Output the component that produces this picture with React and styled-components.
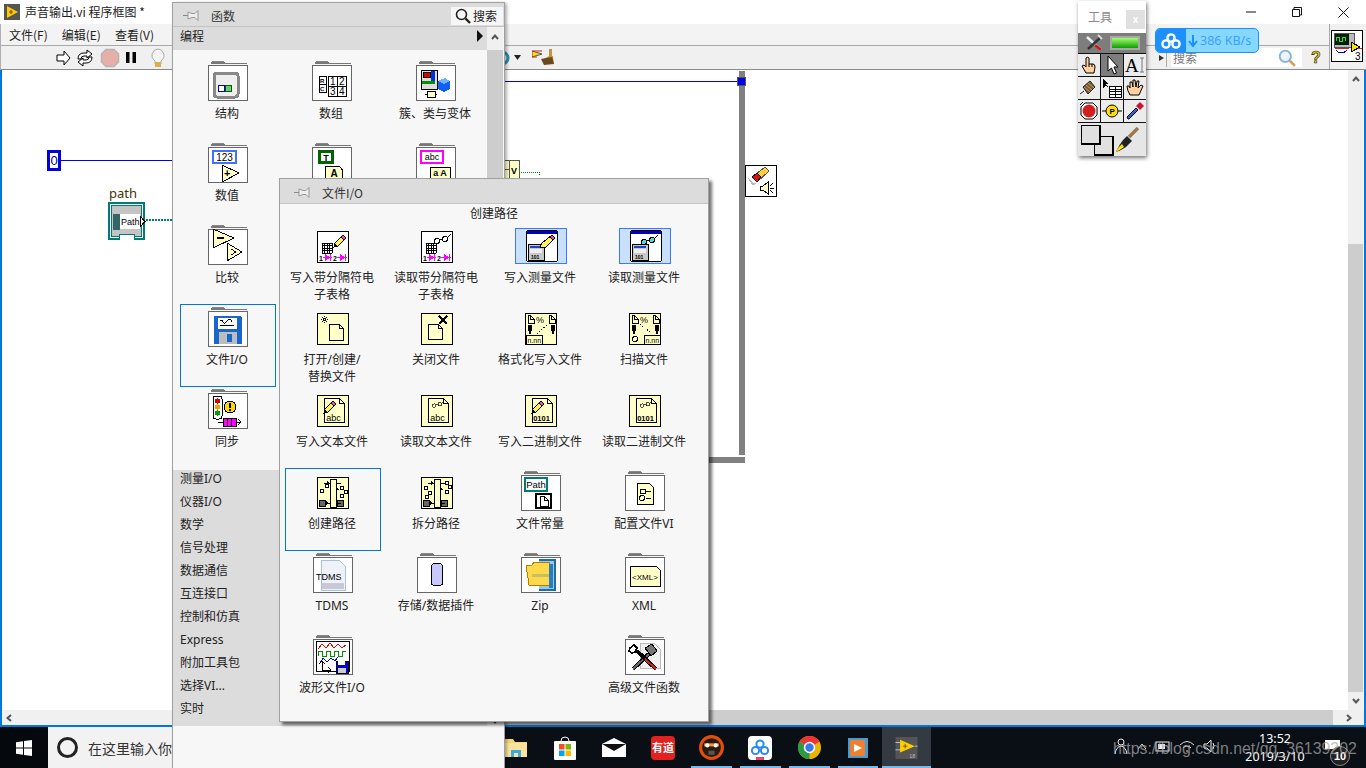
import React from "react";
import styled, { createGlobalStyle } from "styled-components";

const FONT = `"Noto Sans", "Noto Sans CJK SC", sans-serif`;
const CJK = `"Noto Sans CJK SC", "Noto Sans", sans-serif`;
const Y = "#ffffc8";

const Global = createGlobalStyle`
  html, body { margin: 0; padding: 0; width: 1366px; height: 768px; overflow: hidden; background: #fff; }
  body { font-family: ${FONT}; font-size: 12px; color: #222; }
  * { box-sizing: border-box; }
`;

const Desktop = styled.div`
  position: relative; width: 1366px; height: 768px; overflow: hidden;
  display: flex; flex-direction: column;
`;
const Window = styled.div`display: flex; flex-direction: column; height: 727px;`;
const TitleBar = styled.div`
  height: 24px; background: #fff; display: flex; align-items: center; padding-left: 4px; gap: 5px; flex: none;
`;
const TitleText = styled.span`font: 12px ${CJK}; color: #222; line-height: 16px;`;
const WinButtons = styled.div`margin-left: auto; display: flex;`;
const WinButton = styled.div`width: 46px; height: 24px; display: flex; align-items: center; justify-content: center;`;
const HeaderRow = styled.div`display: flex; height: 46px; flex: none; border-bottom: 1px solid #8a8a8a; background: #f0f0f0; border-left: 1px solid #b0b0b0;`;
const HeaderMain = styled.div`flex: 1; display: flex; flex-direction: column; min-width: 0;`;
const MenuBar = styled.div`
  height: 22px; background: #f3f3f3; border-bottom: 1px solid #a8a8a8; display: flex; align-items: center;
  padding-left: 8px; gap: 14px; flex: none;
`;
const MenuItem = styled.span`font: 12px ${CJK}; color: #222;`;
const Toolbar = styled.div`flex: 1; display: flex; align-items: center; padding-left: 52px; padding-right: 6px;`;
const ToolIcon = styled.div`margin-left: ${(p) => p.$gap || 0}px; display: flex; align-items: center; justify-content: center; height: 20px;`;
const SearchMark = styled.div`
  margin-left: auto; width: 0; height: 0; border-left: 5px solid #333; border-top: 3px solid transparent; border-bottom: 3px solid transparent;
`;
const SearchSep = styled.div`width: 1px; height: 18px; background: #aaa; margin: 0 4px 0 2px;`;
const SearchField = styled.div`
  width: 131px; height: 19px; background: #fff; display: flex; align-items: center; justify-content: space-between;
  padding: 0 6px 0 2px; font: 12px ${CJK}; color: #777;
`;
const HelpMark = styled.div`margin-left: 9px; width: 12px; font: 700 16px "Liberation Sans", sans-serif; color: #e8d000; -webkit-text-stroke: .6px #222; line-height: 20px;`;
const ViPane = styled.div`width: 36px; flex: none; border-left: 1px solid #a8a8a8; padding: 6px 0 0 1px; margin-right: 1px;`;

const Canvas = styled.div`
  flex: 1; display: flex; flex-direction: column; min-height: 0;
  border: 2px solid #0078d7; border-top: 0; background: #fff;
`;
const CanvasRow = styled.div`flex: 1; display: flex; min-height: 0;`;
const CanvasArea = styled.div`flex: 1;`;
const VScroll = styled.div`width: 15px; flex: none; background: #f0f0f0; display: flex; flex-direction: column; align-items: stretch; margin-right: 1px;`;
const ScrollBtn = styled.div`height: ${(p) => p.$h || 18}px; display: flex; align-items: center; justify-content: center; flex: none;`;
const VSpace = styled.div`height: ${(p) => p.$h}px; flex: none;`;
const Thumb = styled.div`background: #cdcdcd; flex: 1;`;
const HScroll = styled.div`height: 15px; flex: none; background: #f0f0f0; display: flex; align-items: stretch;`;
const HSpace = styled.div`width: 300px; flex: none; padding-left: 2px; display: flex; align-items: center;`;
const HEnd = styled.div`width: 31px; flex: none; display: flex; align-items: center; justify-content: center;`;

const Taskbar = styled.div`flex: 1; background: #0a0f16; display: flex; align-items: stretch; position: relative;`;
const StartBtn = styled.div`width: 48px; flex: none; background: #05080d; display: flex; align-items: center; justify-content: center;`;
const TaskSearch = styled.div`
  width: 444px; flex: none; background: #f2f2f2; display: flex; align-items: center; padding-left: 9px; gap: 10px;
  font: 14px ${CJK}; color: #333;
`;
const Ring = styled.div`width: 21px; height: 21px; border-radius: 50%; border: 3px solid #222;`;
const TaskItem = styled.div`
  width: 48.8px; flex: none; display: flex; align-items: center; justify-content: center; position: relative;
  background: ${(p) => (p.$active ? "#333a42" : "transparent")};
  &::after {
    content: ""; position: absolute; bottom: 0; height: 2px; background: #76b9ed;
    left: ${(p) => (p.$active ? 0 : 4)}px; right: ${(p) => (p.$active ? 0 : 4)}px;
    display: ${(p) => (p.$open ? "block" : "none")};
  }
`;
const Clock = styled.div`
  position: absolute; left: 1240px; top: 0; width: 70px; height: 41px; color: #fff; text-align: center;
  font: 12.5px/18px ${FONT}; padding-top: 3px;
`;
const Tray = styled.div`position: absolute; left: 1113px; top: 10px; display: flex; gap: 8px; color: #ddd; align-items: center;`;
const NotifyBox = styled.div`
  position: absolute; left: 1325px; top: 13px; width: 15px; height: 11px; background: #fff;
  border-bottom: 2px solid #222;
`;
const NotifyBadge = styled.div`
  position: absolute; left: 1330px; top: 19px; width: 20px; height: 20px; border-radius: 50%; background: #222; border: 1px solid #888;
  color: #fff; font: 700 11px/18px "Liberation Sans", sans-serif; text-align: center;
`;
const Watermark = styled.div`
  position: absolute; left: 1113px; top: 739px; font: 15.9px/20px "Liberation Sans", sans-serif; color: rgba(170,170,170,.72); white-space: nowrap;
`;

const Palette = styled.div`
  position: absolute; left: 172px; top: 2px; width: 333px; bottom: 0; background: #f7f7f7;
  border: 1px solid #a0a0a0; border-bottom: 0; display: flex; flex-direction: column;
  box-shadow: 2px 1px 3px rgba(0,0,0,.3);
`;
const PalTitle = styled.div`
  height: 24px; flex: none; background: #dcdcdc; border-bottom: 1px solid #c4c4c4; display: flex; align-items: center; padding: 2px 0 0 10px; gap: 11px;
  font: 12px ${CJK}; color: #333;
`;
const PalSearch = styled.div`
  margin-left: auto; margin-right: 1px; width: 52px; height: 18px; background: #f6f6f6; display: flex; align-items: center; gap: 2px; padding-left: 4px; color: #222;
`;
const PalBody = styled.div`flex: 1; display: flex; min-height: 0;`;
const PalMain = styled.div`width: 314px; flex: none; display: flex; flex-direction: column;`;
const PalNav = styled.div`
  height: 23px; flex: none; background: #dcdcdc; display: flex; align-items: flex-start; justify-content: space-between;
  padding: 1px 4px 0 7px; font: 12px/16px ${CJK};
`;
const NavArrow = styled.div`margin-top: 2px; width: 0; height: 0; border-left: 6px solid #111; border-top: 6px solid transparent; border-bottom: 6px solid transparent;`;
const PalGrid = styled.div`
  display: grid; grid-template-columns: repeat(3, 96px); column-gap: 8px; grid-auto-rows: 82px;
  padding: 8px 0 2px 7px; flex: none;
`;
const Cell = styled.div`
  display: flex; flex-direction: column; align-items: center; height: 82px;
  ${(p) => p.$selected && "box-shadow: inset 0 0 0 1px #0078d7; height: 83px;"}
`;
const Slot = styled.div`height: 47px; flex: none; padding-top: ${(p) => p.$top}px; display: flex; flex-direction: column; align-items: center;`;
const Label = styled.div`
  width: 92px; padding-right: 2px; text-align: center; font: 12px/17px ${FONT}; color: #222; white-space: pre-line;
`;
const Categories = styled.div`background: #dcdcdc; padding-bottom: 3px; flex: none;`;
const Category = styled.div`height: 23px; padding-left: 7px; font: 12px/18px ${FONT}; color: #222;`;
const PalScroll = styled.div`width: 16px; flex: none; display: flex; flex-direction: column;`;
const ScrollUp = styled.div`height: 23px; flex: none; background: #f0f0f0; display: flex; align-items: flex-start; padding-top: 5px; justify-content: center;`;
const ScrollThumb = styled.div`height: 668px; flex: none; background: #cdcdcd;`;
const ScrollDown = styled.div`height: 8px; flex: none; background: #f0f0f0; display: flex; align-items: center; justify-content: center;`;

const SubPalette = styled.div`
  position: absolute; left: 279px; top: 178px; width: 430px; height: 544px; background: #f7f7f7;
  border: 1px solid #a0a0a0; box-shadow: 3px 3px 3px rgba(0,0,0,.55); display: flex; flex-direction: column;
`;
const SubTitle = styled(PalTitle)`height: 25px; padding-left: 14px;`;
const SubCaption = styled.div`height: 18px; flex: none; text-align: center; font: 12px/17px ${CJK}; color: #222;`;
const SubGrid = styled.div`
  display: grid; grid-template-columns: repeat(4, 96px); column-gap: 8px; grid-auto-rows: 82px; padding-left: 5px;
`;

const Tools = styled.div`
  position: absolute; left: 1078px; top: 1px; width: 68px; height: 155px; background: #e6e6e6; display: flex; flex-direction: column;
  box-shadow: 1px 2px 4px rgba(0,0,0,.55);
`;
const ToolsTitle = styled.div`
  height: 32px; flex: none; background: #fff; display: flex; align-items: center; padding: 0 0 2px 10px; justify-content: space-between;
  font: 12px ${CJK}; color: #8a8a8a;
`;
const ToolsClose = styled.div`width: 19px; height: 19px; margin: 6px 1px 0 0; background: #e0e0e0; color: #fff; font: 700 10px/19px "Liberation Sans", sans-serif; text-align: center;`;
const ToolsStatus = styled.div`height: 21px; flex: none; background: #7d7d7d; display: flex; align-items: center; justify-content: space-between; padding: 0 6px 0 7px; border-bottom: 1px solid #111;`;
const Led = styled.div`width: 30px; height: 14px; border: 2px solid #a8a8a8; background: linear-gradient(180deg,#a4ff70,#0e9c05); `;
const ToolsGrid = styled.div`display: grid; grid-template-columns: repeat(3, 1fr); grid-auto-rows: 22px; gap: 1px; background: #111; padding-bottom: 1px; flex: none;`;
const ToolCell = styled.div`background: ${(p) => (p.$on ? "#7d7d7d" : "#ececec")}; display: flex; align-items: center; justify-content: center;`;
const ToolsBottom = styled.div`flex: 1; display: flex; align-items: center; padding-left: 2px;`;

const Node = styled.div`position: absolute; left: ${(p) => p.$x}px; top: ${(p) => p.$y}px; line-height: 0;`;
const HWire = styled.div`position: absolute; left: ${(p) => p.$x}px; top: ${(p) => p.$y}px; width: ${(p) => p.$w}px; height: 1px; background: #0000e0;`;
const FrameV = styled.div`position: absolute; left: 739px; top: 71px; width: 6px; height: 392px; background: #808080;`;
const FrameH = styled.div`position: absolute; left: 700px; top: 457px; width: 45px; height: 6px; background: #808080;`;
const FrameCorner = styled.div`position: absolute; left: 737px; top: 455px; width: 8px; height: 8px; border-top: 2px dashed #fff; pointer-events: none;`;
const BlueTunnel = styled.div`position: absolute; left: 737px; top: 77px; width: 9px; height: 9px; background: #0000f0; border: 1px solid #555;`;
const ConstBox = styled.div`
  position: absolute; left: 47px; top: 150px; width: 14px; height: 21px; border: 3px solid #0000e0; background: #fff;
  font: 13px/15px "Liberation Sans", sans-serif; color: #000090; text-align: center;
`;
const PathLabel = styled.div`position: absolute; left: 109px; top: 185px; font: 13px/16px ${FONT}; color: #443300;`;

const S = styled.svg`display: block; shape-rendering: crispEdges; flex: none;`;
const Sm = styled.svg`display: block; flex: none;`;
const T = ({ x, y, s = 7, w = 400, c = "#000", a = "start", children, f = "Liberation Sans" }) => (
  <text x={x} y={y} fontSize={s} fontWeight={w} fill={c} textAnchor={a} fontFamily={f}>{children}</text>
);

const FolderTab = () => (
  <S width="40" height="4" viewBox="0 0 40 4">
    <rect x="3" y="2" width="36" height="1" fill="#777" /><rect x="4" y="0" width="12" height="2" fill="#888" /><rect x="3" y="1" width="14" height="1" fill="#777" />
  </S>
);
const FolderBox = ({ children }) => (
  <>
    <FolderTab />
    <S width="40" height="36" viewBox="0 0 40 36"><rect x=".5" y=".5" width="39" height="35" fill="#fff" stroke="#666" />{children}</S>
  </>
);
const Box = ({ fill = "#fff", children }) => (
  <S width="32" height="32" viewBox="0 0 32 32"><rect x=".5" y=".5" width="31" height="31" fill={fill} stroke="#000" />{children}</S>
);
const Pencil = ({ x = 0, y = 0 }) => (
  <g transform={`translate(${x} ${y})`}>
    <path d="M0 12 L1 8 L9 0 L12 3 L4 11 Z" fill="#fff060" stroke="#000" />
    <path d="M9 0 L12 3 L10 5 L7 2 Z" fill="#ff40c0" stroke="#000" />
    <path d="M0 12 L1 9 L3 11 Z" fill="#000" />
  </g>
);
const Glasses = ({ x = 0, y = 0, c = "none", k = 1 }) => (
  <g transform={`translate(${x} ${y}) scale(${k})`} fill={c} stroke="#000">
    <circle cx="3" cy="8" r="2.5" /><circle cx="11" cy="6" r="2.5" /><path d="M5 7 L9 6 M13 5 L17 1" fill="none" />
  </g>
);
const SheetGrid = () => (
  <g stroke="#000" fill="#fff">
    {[0, 1, 2, 3, 4].map((i) => <path key={i} d={`M5 ${12 + i * 2.5} H15`} />)}
    {[0, 1, 2, 3, 4].map((i) => <path key={"v" + i} d={`M${5 + i * 2.5} 12 V22`} />)}
  </g>
);
const SheetFoot = () => (
  <g>
    <T x="2" y="30" s="7" w="700">1</T><rect x="6" y="26" width="9" height="1" fill="#f0f" /><path d="M8 23 L13 26.5 L8 30 Z" fill="#f0f" /><rect x="13" y="23" width="1" height="7" fill="#f0f" />
    <T x="16" y="30" s="7" w="700">2</T><rect x="20" y="26" width="10" height="1" fill="#f0f" /><path d="M23 23 L28 26.5 L23 30 Z" fill="#f0f" /><rect x="28" y="23" width="1" height="7" fill="#f0f" />
  </g>
);
const ExpressHl = styled.div`width: 52px; height: 36px; background: #c8e0fa; border: 1px solid #3b78ff; padding: 1px 0 0 10px; margin-top: -3px;`;
const ExpressIcon = ({ children }) => (
  <ExpressHl>
    <S width="32" height="32" viewBox="0 0 32 32">
      <rect x=".5" y=".5" width="31" height="31" rx="2" fill="#fff" stroke="#000" />
      <rect x="1" y="1" width="30" height="3" fill="#0000c0" />
      <rect x="2" y="14" width="16" height="16" fill="#c8c8c8" stroke="#000" />
      <rect x="4" y="16" width="12" height="2" fill="#2040d0" /><rect x="4" y="19" width="12" height="4" fill="#eee" />
      <T x="5" y="29" s="5" w="700">101</T>
      {children}
    </S>
  </ExpressHl>
);
const Doc = ({ x, y, w = 12, h = 15, f = "#fff" }) => (
  <path d={`M${x} ${y} H${x + w - 4} L${x + w} ${y + 4} V${y + h} H${x} Z M${x + w - 4} ${y} V${y + 4} H${x + w}`} fill={f} stroke="#000" />
);
const FormatBody = ({ flip }) => (
  <g>
    <Doc x={3} y={2} w={6} h={8} f={Y} /><Doc x={24} y={2} w={6} h={8} f={Y} />
    <T x="11" y="10" s="9">%</T>
    <rect x="3" y="12" width="4" height="6" fill="#000" /><rect x="4" y="18" width="2" height="3" fill="#000" />
    <rect x="26" y="12" width="4" height="6" fill="#000" /><rect x="27" y="18" width="2" height="3" fill="#000" />
    <path d={flip ? "M11 11 L21 19" : "M12 21 L22 12"} stroke="#000" strokeDasharray="1 2" fill="none" />
  </g>
);
const TextDoc = ({ tool, label }) => (
  <Box fill={Y}>
    <path d="M7 3 H22 L27 8 V27 H7 Z M22 3 V8 H27" fill={Y} stroke="#000" />
    {tool}
    <T x="16.5" y="26" s={label === "abc" ? 9 : 7.5} a="middle" w={label === "abc" ? 400 : 700}>{label}</T>
  </Box>
);
const PathSplit = ({ build }) => (
  <Box fill={Y}>
    <rect x="13" y="2" width="6" height="28" fill={Y} stroke="#000" />
    <rect x="2" y="23" width="6" height="6" fill="#666" stroke="#000" />
    <rect x="20" y="23" width="6" height="6" fill="#666" stroke="#000" />
    <g fill="#fff" stroke="#000">
      {(build
        ? [[3, 12], [8, 7], [23, 9], [27, 13], [23, 17]]
        : [[3, 9], [7, 14], [4, 18], [24, 4], [27, 8], [24, 13]]
      ).map(([x, y], i) => <rect key={i} x={x} y={y} width="3" height="3" />)}
    </g>
    <path d="M9 26 H13 M19 26 H24 M7 6 H13 M19 6 H24 M19 12 H22" stroke="#000" />
    <path d="M10 4 L13 6 L10 8 Z M19 10 L22 12 L19 14 Z M9 24 L12 26 L9 28 Z" fill="#000" />
  </Box>
);

const Icons = {
  structure: <FolderBox><rect x="6" y="8" width="24" height="24" rx="3" fill="#eee" stroke="#888" strokeWidth="3" /><rect x="10" y="20" width="6" height="6" fill="#fff" stroke="#0000c0" /><rect x="17" y="20" width="6" height="6" fill="#70c870" stroke="#006000" /></FolderBox>,
  array: <FolderBox>
    <g fill="#fff" stroke="#000">
      <rect x="7" y="11" width="7" height="8" /><rect x="7" y="19" width="7" height="8" />
      <rect x="16" y="11" width="18" height="10" /><path d="M25 11 V21" /><rect x="16" y="21" width="18" height="10" /><path d="M25 21 V31" />
    </g>
    <T x="8" y="17.5" s="6" w="700">R</T><T x="8" y="25.5" s="6" w="700">C</T><T x="18" y="20" s="10">1</T><T x="27" y="20" s="10">2</T><T x="18" y="30" s="10">3</T><T x="27" y="30" s="10">4</T>
  </FolderBox>,
  cluster: <FolderBox>
    <rect x="5" y="5" width="16" height="19" fill="#ddd" stroke="#000" /><rect x="7" y="7" width="7" height="5" fill="#e00000" stroke="#000" /><rect x="15" y="6" width="4" height="10" fill="#0030e0" /><rect x="6" y="16" width="13" height="3" fill="#009000" />
    <path d="M22 16 L29 13 L34 16 V24 L28 27 L22 24 Z" fill="#1060f0" /><path d="M22 16 L28 19 L34 16 L29 13 Z" fill="#70b0ff" />
    <rect x="11" y="26" width="8" height="6" fill={Y} stroke="#000" /><path d="M9 29 H11 M19 29 H21" stroke="#000" />
  </FolderBox>,
  numeric: <FolderBox>
    <rect x="5" y="4" width="23" height="12" fill="#fff" stroke="#4070ff" strokeWidth="2" /><T x="16.5" y="13.5" s="10" a="middle">123</T>
    <path d="M14 18 V35 L31 26 Z" fill={Y} stroke="#000" /><T x="16" y="30" s="11" w="700">+</T>
  </FolderBox>,
  boolean: <FolderBox><rect x="6" y="3" width="16" height="14" fill="#006400" /><rect x="9" y="6" width="10" height="8" fill="#fff" /><T x="14" y="13.5" s="9" a="middle" w="700">T</T><path d="M13 19 H24 Q31 19 31 27 Q31 35 24 35 H13 Z" fill={Y} stroke="#000" /><T x="22" y="30" s="10" a="middle" w="700">A</T></FolderBox>,
  string: <FolderBox><rect x="5" y="4" width="22" height="12" fill="#fff" stroke="#f0f" strokeWidth="2" /><T x="16" y="13" s="9" a="middle">abc</T><rect x="14" y="20" width="20" height="11" fill={Y} stroke="#000" /><T x="24" y="29" s="9" a="middle" w="700">a A</T></FolderBox>,
  compare: <FolderBox><path d="M5 0 V19 L26 9 Z" fill={Y} stroke="#000" /><rect x="9" y="8" width="7" height="2" fill="#000" /><path d="M19 14 V32 L34 23 Z" fill={Y} stroke="#000" /><path d="M23 20 L28 23 L23 26" stroke="#000" fill="none" /></FolderBox>,
  fileio: <FolderBox>
    <path d="M6 5 H32 L34 7 V33 H6 Z" fill="#1b66c9" /><rect x="10" y="7" width="19" height="11" fill="#fff" /><path d="M12 10 Q14 8 15 11 T19 10 T24 11 M12 14 H26" stroke="#000" fill="none" />
    <rect x="11" y="21" width="18" height="12" fill="#bdbdbd" /><rect x="19" y="23" width="5" height="8" fill="#1b66c9" />
  </FolderBox>,
  sync: <FolderBox>
    <rect x="5" y="3" width="9" height="23" rx="3" fill="#fff" stroke="#000" />
    <circle cx="9.5" cy="8" r="2.6" fill="#e00000" /><circle cx="9.5" cy="14" r="2.6" fill="#f0a000" /><circle cx="9.5" cy="20" r="2.6" fill="#00a000" />
    <circle cx="22" cy="14" r="6" fill="#ffd800" stroke="#000" /><rect x="21" y="10" width="2" height="5" fill="#000" /><rect x="21" y="16" width="2" height="2" fill="#000" />
    <path d="M10 29 H15 M28 29 H32 M30 26 L33 29 L30 32" stroke="#000" fill="none" /><rect x="15" y="25" width="13" height="8" fill="#f0f" stroke="#000" /><path d="M19 25 V33 M23 25 V33" stroke="#000" />
  </FolderBox>,
  writeSheet: <Box><SheetGrid /><Pencil x={17} y={4} /><SheetFoot /></Box>,
  readSheet: <Box><SheetGrid /><Glasses x={13} y={2} /><SheetFoot /></Box>,
  writeMeas: <ExpressIcon><path d="M14 17 L16 13 L26 5 L29 8 L19 18 Z" fill="#fff060" stroke="#000" /><path d="M26 5 L29 8 L27 10 L24 7 Z" fill="#ff40c0" stroke="#000" /></ExpressIcon>,
  readMeas: <ExpressIcon><Glasses x={11} y={4} c="#40e0e0" /></ExpressIcon>,
  open: <Box fill={Y}><Doc x={12} y={11} w={14} h={16} f={Y} /><path d="M5 4 L10 9 M10 4 L5 9 M7.5 3 V10 M4 6.5 H11" stroke="#000" strokeDasharray="1 1" /></Box>,
  close: <Box fill={Y}><Doc x={7} y={11} w={14} h={15} f={Y} /><path d="M18 3 L26 11 M26 3 L18 11" stroke="#000" strokeWidth="2" /></Box>,
  format: <Box fill={Y}><FormatBody /><rect x="1" y="22" width="16" height="9" fill={Y} stroke="#000" /><T x="2.5" y="29.5" s="7">n.nn</T></Box>,
  scan: <Box fill={Y}><FormatBody flip /><circle cx="6" cy="26" r="2.5" fill="none" stroke="#000" /><rect x="15" y="22" width="16" height="9" fill={Y} stroke="#000" /><T x="16.5" y="29.5" s="7">n.nn</T></Box>,
  writeText: <TextDoc label="abc" tool={<Pencil x={7} y={6} />} />,
  readText: <TextDoc label="abc" tool={<Glasses x={11} y={5} k={0.7} />} />,
  writeBin: <TextDoc label="0101" tool={<Pencil x={7} y={6} />} />,
  readBin: <TextDoc label="0101" tool={<Glasses x={11} y={5} k={0.7} />} />,
  build: <PathSplit build />,
  strip: <PathSplit />,
  pathConst: <FolderBox>
    <rect x="4" y="3" width="22" height="13" fill="#fff" stroke="#007b73" strokeWidth="2" /><T x="15" y="13" s="9.5" a="middle">Path</T>
    <rect x="15" y="19" width="15" height="14" fill="#fff" stroke="#000" strokeWidth="2" /><Doc x={19} y={21} w={8} h={10} />
  </FolderBox>,
  config: <FolderBox><path d="M12 8 H24 L28 12 V29 H12 Z" fill={Y} stroke="#000" /><rect x="15" y="14" width="5" height="4" fill="none" stroke="#000" /><circle cx="17" cy="23" r="2.5" fill="none" stroke="#000" /><path d="M21 16 H26 M21 23 H26" stroke="#000" /></FolderBox>,
  tdms: <FolderBox><path d="M8 3 H26 L32 9 V33 H8 Z" fill="#eef2fa" stroke="#a8c0d8" /><rect x="9" y="26" width="22" height="6" fill="#c8c8d8" /><T x="3" y="23" s="9" c="#000">TDMS</T></FolderBox>,
  storage: <FolderBox><ellipse cx="20" cy="9" rx="5.5" ry="2.5" fill="#c8c8ff" stroke="#000" /><path d="M14.5 9 V27 Q20 31 25.5 27 V9" fill="#c8c8ff" stroke="#000" /></FolderBox>,
  zip: <FolderBox>
    <path d="M18 3 H34 V33 H18" fill="#9cc8e8" stroke="#1a6fa8" strokeWidth="2" />
    <path d="M5 8 H11 L13 5 H28 V28 H8 Z" fill="#ffd84c" stroke="#b08000" /><rect x="11" y="17" width="18" height="3" fill="#c8c060" />
    <rect x="28" y="7" width="4" height="24" fill="#2a7cc0" />
  </FolderBox>,
  xml: <FolderBox><path d="M5 9 H31 L35 13 V29 H5 Z" fill={Y} stroke="#000" /><T x="20" y="23" s="8" a="middle">&lt;XML&gt;</T></FolderBox>,
  waveFile: <FolderBox>
    <rect x="3" y="2" width="33" height="30" fill="#fff" stroke="#000" />
    <path d="M5 10 L9 5 L13 9 L17 4 L21 9 L25 5 L29 9 L33 6" stroke="#e00000" fill="none" />
    <path d="M5 17 V12 H9 V17 H13 V12 H17 V17 H21 V12 H25 V17 H29 V12 H33" stroke="#009000" fill="none" />
    <path d="M7 24 L10 19 L14 23 L18 19 L22 22 L25 18" stroke="#0000e0" fill="none" />
    <path d="M9 31 V22 M6 25 L9 22 L12 25 M9 31 H18 M15 28 L18 31 L15 34" stroke="#000" fill="none" />
    <rect x="23" y="22" width="12" height="12" fill="#0000d0" stroke="#000" /><rect x="25" y="22" width="7" height="4" fill="#fff" /><rect x="25" y="29" width="8" height="5" fill="#ccc" />
  </FolderBox>,
  advanced: <FolderBox>
    <path d="M15 4 H29 L35 10 V29 H15 Z" fill="#f0f0f0" stroke="#bbb" />
    <path d="M8 30 L26 13" stroke="#000" strokeWidth="4" /><path d="M8 30 L26 13" stroke="#666" strokeWidth="2" />
    <path d="M20 9 L27 5 L32 12 L26 17 Z" fill="#777" stroke="#000" />
    <path d="M31 30 L12 12" stroke="#000" strokeWidth="4" /><path d="M31 30 L20 20" stroke="#d02020" strokeWidth="2" />
    <path d="M5 9 L9 6 L12 9 L10 13 L7 14 L4 12 Z" fill="#fff" stroke="#000" strokeWidth="1.6" />
  </FolderBox>,
};

const FOLDERS = ["structure","array","cluster","numeric","boolean","string","compare","fileio","sync","pathConst","config","tdms","storage","zip","xml","waveFile","advanced"];
const SlotFor = ({ name }) => <Slot $top={FOLDERS.includes(name) ? 3 : 9}>{Icons[name]}</Slot>;

const palItems = [
  ["structure", "结构"], ["array", "数组"], ["cluster", "簇、类与变体"],
  ["numeric", "数值"], ["boolean", ""], ["string", ""],
  ["compare", "比较"], null, null,
  ["fileio", "文件I/O", true], null, null,
  ["sync", "同步"], null, null,
];
const subItems = [
  ["writeSheet", "写入带分隔符电子表格"], ["readSheet", "读取带分隔符电子表格"], ["writeMeas", "写入测量文件"], ["readMeas", "读取测量文件"],
  ["open", "打开/创建/\n替换文件"], ["close", "关闭文件"], ["format", "格式化写入文件"], ["scan", "扫描文件"],
  ["writeText", "写入文本文件"], ["readText", "读取文本文件"], ["writeBin", "写入二进制文件"], ["readBin", "读取二进制文件"],
  ["build", "创建路径", true], ["strip", "拆分路径"], ["pathConst", "文件常量"], ["config", "配置文件VI"],
  ["tdms", "TDMS"], ["storage", "存储/数据插件"], ["zip", "Zip"], ["xml", "XML"],
  ["waveFile", "波形文件I/O"], null, null, ["advanced", "高级文件函数"],
];
const categories = ["测量I/O", "仪器I/O", "数学", "信号处理", "数据通信", "互连接口", "控制和仿真", "Express", "附加工具包", "选择VI...", "实时"];

const Items = ({ list }) => list.map((it, i) =>
  it ? (
    <Cell key={i} $selected={it[2]}>
      <SlotFor name={it[0]} />
      <Label>{it[1]}</Label>
    </Cell>
  ) : <div key={i} />
);

const Pin = () => (
  <Sm width="17" height="13" viewBox="0 0 17 13">
    <path d="M0 6.5 H5" stroke="#888" /><path d="M5 3 L9 4.5 H12 L15 1.5 V11.5 L12 8.5 H9 L5 10 Z" fill="#eee" stroke="#999" />
  </Sm>
);
const Magnifier = ({ size = 16, c = "#222", lens = "none", k = 1.6, handle }) => (
  <Sm width={size} height={size} viewBox="0 0 16 16"><circle cx="6.5" cy="6.5" r="5" fill={lens} stroke={c} strokeWidth={k} /><path d="M10.5 10.5 L15 15" stroke={handle || c} strokeWidth={k + 0.8} /></Sm>
);
const Chevron = ({ dir, c = "#555", size = 10 }) => {
  const d = { up: "M2 7 L5 3.5 L8 7", down: "M2 3 L5 6.5 L8 3", left: "M7 2 L3.5 5 L7 8", right: "M3 2 L6.5 5 L3 8" }[dir];
  return <Sm width={size} height={size} viewBox="0 0 10 10"><path d={d} fill="none" stroke={c} strokeWidth="2" /></Sm>;
};
const LvLogo = ({ size = 16 }) => (
  <Sm width={size} height={size} viewBox="0 0 16 16"><rect width="16" height="16" fill="#555" /><path d="M3 2 V14 L14 8 Z" fill="#ffc800" /><path d="M5 8 H9 M7 6 V10" stroke="#7a5a00" strokeWidth="1.2" /></Sm>
);

const ToolHand = () => <Sm width="20" height="20" viewBox="0 0 20 20"><path d="M7 18 L3 11 L5 10 L7 12 V3 Q8.5 1.5 10 3 V9 H14 Q16 9 16 12 L15 18 Z" fill="#ffd0a0" stroke="#000" /><path d="M10 9 V12 M13 9 V12" stroke="#000" /></Sm>;
const ToolGrab = () => <Sm width="20" height="20" viewBox="0 0 20 20"><path d="M5 17 Q2 12 2 8 L4 8 L5 10 L5 4 L7 4 L8 9 L8 2 H10 L11 9 L12 3 L14 3 L13 10 L16 7 L18 8 L14 17 Z" fill="#ffd0a0" stroke="#000" /></Sm>;

const BadgeWrap = styled.div`
  width: 104px; height: 25px; border: 1px solid #1e8fff; border-radius: 5px; overflow: hidden; display: flex; background: #86d8ff;
  line-height: normal;
`;
const BadgeLeft = styled.div`width: 30px; flex: none; background: #1e8fff; display: flex; align-items: center; justify-content: center;`;
const BadgeText = styled.div`flex: 1; display: flex; align-items: center; gap: 2px; padding-left: 2px; font: 12.5px "Noto Sans", sans-serif; color: #3aa0ff; white-space: nowrap;`;
const BaiduBadge = () => (
  <BadgeWrap>
    <BadgeLeft>
      <Sm width="20" height="16" viewBox="0 0 20 16"><g fill="none" stroke="#fff" strokeWidth="2.4"><circle cx="10" cy="5" r="3.6" /><circle cx="5" cy="11" r="3.6" /><circle cx="15" cy="11" r="3.6" /></g></Sm>
    </BadgeLeft>
    <BadgeText>
      <Sm width="10" height="12" viewBox="0 0 10 12"><path d="M5 0 V10 M1 6 L5 11 L9 6" fill="none" stroke="#1e8fff" strokeWidth="2" /></Sm>
      386 KB/s
    </BadgeText>
  </BadgeWrap>
);

const App = () => (
  <Desktop>
    <Global />
    <Window>
      <TitleBar>
        <LvLogo />
        <TitleText>声音输出.vi 程序框图 *</TitleText>
        <WinButtons>
          <WinButton><Sm width="10" height="10" viewBox="0 0 10 10"><path d="M0 5 H10" stroke="#111" /></Sm></WinButton>
          <WinButton><Sm width="10" height="10" viewBox="0 0 10 10"><path d="M2 2 V0.5 H9.5 V8 H8 M0.5 2.5 H7.5 V9.5 H0.5 Z" fill="none" stroke="#111" /></Sm></WinButton>
          <WinButton><Sm width="11" height="11" viewBox="0 0 11 11"><path d="M0.5 0.5 L10.5 10.5 M10.5 0.5 L0.5 10.5" stroke="#111" /></Sm></WinButton>
        </WinButtons>
      </TitleBar>
      <HeaderRow>
        <HeaderMain>
          <MenuBar><MenuItem>文件(F)</MenuItem><MenuItem>编辑(E)</MenuItem><MenuItem>查看(V)</MenuItem></MenuBar>
          <Toolbar>
            <ToolIcon><Sm width="20" height="20" viewBox="0 0 20 20"><path d="M4 7 H11 V3 L17 10 L11 17 V13 H4 Z" fill="#fff" stroke="#000" /></Sm></ToolIcon>
            <ToolIcon $gap={2}><Sm width="20" height="20" viewBox="0 0 20 20"><path d="M3 11 Q3 5 9 5 H12 V2 L17 6 L12 10 V8 H9 Q6 8 6 11 Z M17 9 Q17 15 11 15 H8 V18 L3 14 L8 10 V12 H11 Q14 12 14 9 Z" fill="#fff" stroke="#000" /></Sm></ToolIcon>
            <ToolIcon $gap={5}><Sm width="20" height="20" viewBox="0 0 20 20"><path d="M6 1.5 H14 L18.5 6 V14 L14 18.5 H6 L1.5 14 V6 Z" fill="#e6b0a8" stroke="#b4b4b4" strokeWidth="1.5" /></Sm></ToolIcon>
            <ToolIcon $gap={1}><Sm width="20" height="20" viewBox="0 0 20 20"><rect x="5" y="4" width="3.5" height="11" fill="#000" /><rect x="11.5" y="4" width="3.5" height="11" fill="#000" /></Sm></ToolIcon>
            <ToolIcon $gap={7}><Sm width="20" height="20" viewBox="0 0 20 20"><path d="M7 13 Q3 10 4 6 Q6 1 10 1 Q14 1 16 6 Q17 10 13 13 V16 H7 Z" fill="#f4f4f0" stroke="#aaa" /><rect x="7" y="14" width="6" height="5" fill="#d8b050" /></Sm></ToolIcon>
            <ToolIcon $gap={326}><Sm width="16" height="16" viewBox="0 0 16 16"><circle cx="8" cy="8" r="6" fill="none" stroke="#2a8ca8" strokeWidth="3" /></Sm></ToolIcon>
            <ToolIcon $gap={4}><Sm width="7" height="5" viewBox="0 0 7 5"><path d="M0 0 H7 L3.5 5 Z" fill="#222" /></Sm></ToolIcon>
            <ToolIcon $gap={11}><Sm width="24" height="20" viewBox="0 0 24 20"><path d="M0 3 V9 L10 6 Z" fill="#ffe000" stroke="#555" /><path d="M0 3 H10 M0 9 H5" stroke="#d02020" /><path d="M17 1 V8 L10 12 L22 16 L21 8 H20 V1 Z" fill="#c89040" /><path d="M9 11 L20 9 L22 16 L12 17 Z" fill="#6a4a1c" /></Sm></ToolIcon>
            <SearchMark />
            <SearchSep />
            <SearchField>搜索<Magnifier size={18} c="#8ab0d0" lens="#e8f4ff" handle="#d8a060" /></SearchField>
            <HelpMark>?</HelpMark>
          </Toolbar>
        </HeaderMain>
        <ViPane>
          <S width="32" height="32" viewBox="0 0 32 32">
            <rect x=".5" y=".5" width="31" height="31" fill="#fff" stroke="#000" />
            <rect x="3" y="3" width="20" height="14" fill="#bbb" stroke="#555" /><rect x="4" y="4" width="14" height="11" fill="#002000" />
            <path d="M5 11 V7 H8 V11 H11 V7 H14 V11" stroke="#30e030" fill="none" />
            <path d="M4 18 H18 M20 18 H31" stroke="#d02020" /><path d="M5 20 Q10 26 16 20" stroke="#0000c0" fill="none" />
            <path d="M20 12 V22 L29 17 Z" fill="#ffe000" stroke="#000" />
            <T x="24" y="30" s="10">3</T>
          </S>
        </ViPane>
      </HeaderRow>
      <Canvas>
        <CanvasRow>
          <CanvasArea />
          <VScroll>
            <ScrollBtn $h={18}><Chevron dir="up" /></ScrollBtn>
            <VSpace $h={156} />
            <Thumb />
            <ScrollBtn $h={18}><Chevron dir="down" /></ScrollBtn>
          </VScroll>
        </CanvasRow>
        <HScroll>
          <HSpace><Chevron dir="left" /></HSpace>
          <Thumb />
          <HEnd><Chevron dir="right" /></HEnd>
        </HScroll>
      </Canvas>
    </Window>
    <Taskbar>
      <StartBtn>
        <Sm width="16" height="16" viewBox="0 0 16 16"><path d="M0 2.2 L7 1.2 V7.5 H0 Z M8 1 L16 0 V7.5 H8 Z M0 8.5 H7 V14.8 L0 13.8 Z M8 8.5 H16 V16 L8 15 Z" fill="#fff" /></Sm>
      </StartBtn>
      <TaskSearch><Ring />在这里输入你</TaskSearch>
      <TaskItem>
        <Sm width="22" height="18" viewBox="0 0 22 18"><path d="M0 0 H8 L10 3 H22 V18 H0 Z" fill="#f5d678" /><rect x="0" y="4" width="22" height="14" fill="#fbe39a" /><path d="M6 18 V11 H16 V18 H13 V14 H9 V18 Z" fill="#3aa9e0" /></Sm>
      </TaskItem>
      <TaskItem>
        <Sm width="22" height="24" viewBox="0 0 22 24"><path d="M7 5 Q7 1 11 1 Q15 1 15 5" fill="none" stroke="#fff" /><rect x="0" y="5" width="22" height="19" rx="1" fill="#fff" /><rect x="5" y="8" width="5.5" height="5.5" fill="#f25022" /><rect x="11.5" y="8" width="5.5" height="5.5" fill="#7fba00" /><rect x="5" y="14.5" width="5.5" height="5.5" fill="#00a4ef" /><rect x="11.5" y="14.5" width="5.5" height="5.5" fill="#ffb900" /></Sm>
      </TaskItem>
      <TaskItem>
        <Sm width="24" height="19" viewBox="0 0 24 19"><path d="M0 6 L12 0 L24 6 V19 H0 Z" fill="#fff" /><path d="M0 6 H24 L12 13 Z" fill="#111" /></Sm>
      </TaskItem>
      <TaskItem>
        <Sm width="24" height="24" viewBox="0 0 24 24"><rect width="24" height="24" rx="4" fill="#e3211f" /><T x="12" y="16" s="11" c="#fff" a="middle" w="700" f="Noto Sans CJK SC">有道</T></Sm>
      </TaskItem>
      <TaskItem $open>
        <Sm width="25" height="25" viewBox="0 0 24 24"><circle cx="12" cy="12" r="12" fill="#e0500a" /><circle cx="12" cy="12" r="9" fill="#2a1a10" /><rect x="5" y="8" width="14" height="3" fill="#f09040" /><circle cx="8" cy="10" r="2" fill="#fff" /><circle cx="16" cy="10" r="2" fill="#fff" /><rect x="9" y="15" width="6" height="4" fill="#555" /></Sm>
      </TaskItem>
      <TaskItem $open>
        <Sm width="24" height="24" viewBox="0 0 24 24"><rect width="24" height="24" rx="4" fill="#fff" /><g fill="none" stroke="#2a8cf0" strokeWidth="2"><circle cx="12" cy="8" r="3.6" /><circle cx="7.5" cy="14.5" r="3.6" /><circle cx="16.5" cy="14.5" r="3.6" /></g><rect x="8" y="21" width="8" height="3" fill="#f04070" /></Sm>
      </TaskItem>
      <TaskItem $open>
        <Sm width="23" height="23" viewBox="0 0 24 24"><circle cx="12" cy="12" r="12" fill="#e8b500" /><path d="M12 12 L1.6 6 A12 12 0 0 1 22.4 6 Z" fill="#e33" /><path d="M12 12 L1.6 6 A12 12 0 0 0 12 24 Z" fill="#2a9a44" /><circle cx="12" cy="12" r="5.2" fill="#3b78e7" stroke="#fff" strokeWidth="1.6" /></Sm>
      </TaskItem>
      <TaskItem $open>
        <Sm width="20" height="20" viewBox="0 0 20 20"><rect width="20" height="20" fill="#4a9ad0" /><rect x="2" y="2" width="15" height="16" rx="2" fill="#f08030" /><path d="M6 6 L14 10 L6 14 Z" fill="#fff" /></Sm>
      </TaskItem>
      <TaskItem $open $active>
        <Sm width="23" height="22" viewBox="0 0 24 24"><rect width="24" height="24" fill="#555" /><path d="M5 3 V17 L21 10 Z" fill="#ffd000" /><path d="M0 6 H5 M0 14 H5 M21 10 H24" stroke="#ccc" /><path d="M8 10 H13 M10.5 7.5 V12.5" stroke="#6a5000" /><T x="15" y="23" s="6" c="#bbb">18</T></Sm>
      </TaskItem>
      <Tray>
        <Sm width="16" height="18" viewBox="0 0 16 18"><circle cx="8" cy="5" r="3" fill="none" stroke="#eee" /><path d="M2 17 Q3 10 8 9 Q13 10 14 17" fill="none" stroke="#eee" /></Sm>
        <Sm width="10" height="8" viewBox="0 0 10 8"><path d="M1 7 L5 2 L9 7" fill="none" stroke="#ddd" /></Sm>
        <Sm width="16" height="14" viewBox="0 0 16 14"><rect x="1" y="3" width="13" height="9" fill="none" stroke="#eee" /><rect x="3" y="5" width="7" height="5" fill="#eee" /></Sm>
        <Sm width="16" height="14" viewBox="0 0 16 14"><path d="M1 6 Q8 -1 15 6 M4 9 Q8 5 12 9 M7 12 L9 12" fill="none" stroke="#ddd" /></Sm>
        <Sm width="14" height="14" viewBox="0 0 14 14"><path d="M1 5 H4 L8 1 V13 L4 9 H1 Z" fill="none" stroke="#eee" /><path d="M10 4 Q12 7 10 10" fill="none" stroke="#eee" /></Sm>
      </Tray>
      <Clock>13:52<br />2019/3/10</Clock>
      <NotifyBox />
      <NotifyBadge>10</NotifyBadge>
    </Taskbar>

    <HWire $x={61} $y={160} $w={112} />
    <ConstBox>0</ConstBox>
    <PathLabel>path</PathLabel>
    <Node $x={108} $y={202}>
      <S width="38" height="38" viewBox="0 0 38 38">
        <rect x="1" y="1" width="35" height="36" fill="#fff" stroke="#007b73" strokeWidth="2" />
        <rect x="3.5" y="3.5" width="30" height="31" fill="none" stroke="#007b73" />
        <rect x="4" y="4" width="29" height="30" fill="#c4c4c4" />
        <rect x="5" y="12" width="7" height="16" fill="#366" />
        <rect x="12" y="12" width="20" height="15" fill="#fff" /><T x="13" y="23" s="9">Path</T>
        <path d="M32 14 L37 19.5 L32 25 Z" fill="#fff" stroke="#000" />
        <rect x="11" y="32" width="15" height="6" fill="#fff" stroke="#007b73" />
      </S>
    </Node>
    <Node $x={146} $y={218}>
      <S width="27" height="4" viewBox="0 0 27 4"><path d="M0 1.5 H27 M0 2.5 H27" stroke="#007b73" strokeDasharray="2 1" /></S>
    </Node>
    <HWire $x={504} $y={81} $w={234} />
    <FrameV />
    <FrameH />
    <FrameCorner />
    <BlueTunnel />
    <Node $x={504} $y={160}>
      <S width="36" height="18" viewBox="0 0 36 18">
        <rect x="0" y="0" width="15" height="18" fill={Y} stroke="#555" /><path d="M0 9 H5 M5 0 V18" stroke="#555" />
        <T x="7" y="14" s="9" w="700">V</T>
        <path d="M17 12 H35 V15" stroke="#008000" strokeDasharray="1 1" fill="none" />
      </S>
    </Node>
    <Node $x={745} $y={165}>
      <S width="32" height="32" viewBox="0 0 32 32">
        <rect x=".5" y=".5" width="31" height="31" fill="#fff" stroke="#000" />
        <path d="M7 12 L20 2 L24 6 L12 17 Z" fill="#ffd040" stroke="#555" /><path d="M7 12 L12 8 L16 12 L12 17 Z" fill="#e01010" stroke="#000" />
        <path d="M3 13 L8 18 L13 19 L7 20 Z" fill="#bbb" />
        <path d="M15 21 H18 L23 17 V29 L18 25 H15 Z" fill={Y} stroke="#000" /><path d="M25 23 H29 M25 21 L28 18 M25 25 L28 28" stroke="#000" />
      </S>
    </Node>

    <Tools>
      <ToolsTitle>工具<ToolsClose>x</ToolsClose></ToolsTitle>
      <ToolsStatus>
        <Sm width="18" height="18" viewBox="0 0 18 18"><path d="M2 3 L16 16" stroke="#eee" strokeWidth="2.4" /><path d="M10 11 L16 16" stroke="#c01818" strokeWidth="2.6" /><path d="M16 3 L3 15" stroke="#333" strokeWidth="2.4" /><path d="M13 1 L17 5" stroke="#ddd" strokeWidth="2" /></Sm>
        <Led />
      </ToolsStatus>
      <ToolsGrid>
        <ToolCell><ToolHand /></ToolCell>
        <ToolCell $on><Sm width="18" height="20" viewBox="0 0 18 20"><path d="M5 1 V16 L8.5 13 L11 19 L13.5 18 L11 12 H15 Z" fill="#fff" stroke="#000" /></Sm></ToolCell>
        <ToolCell><Sm width="22" height="20" viewBox="0 0 22 20"><T x="1" y="17" s="19" f="Liberation Serif">A</T><path d="M18 3 V17 M16 3 H20 M16 17 H20" stroke="#777" /></Sm></ToolCell>
        <ToolCell><Sm width="20" height="20" viewBox="0 0 20 20"><path d="M4 9 L11 3 L16 9 L9 16 Z" fill="#7a5a30" stroke="#222" /><path d="M7 7 L13 12 M9 5 L15 10 M5 9 L11 14" stroke="#c0a070" /><path d="M1 16 L5 13" stroke="#222" /></Sm></ToolCell>
        <ToolCell><S width="20" height="20" viewBox="0 0 20 20"><path d="M1 1 V10 L3 8 L6 9 L4 6 H7 Z" fill="#000" /><rect x="7" y="8" width="12" height="11" fill="#fff" stroke="#000" /><path d="M7 11 H19 M7 13 H19 M7 16 H19 M13 8 V19" stroke="#000" /></S></ToolCell>
        <ToolCell><ToolGrab /></ToolCell>
        <ToolCell><Sm width="20" height="20" viewBox="0 0 20 20"><path d="M6 2 H14 L18 6 V14 L14 18 H6 L2 14 V6 Z" fill="#fff" stroke="#000" /><circle cx="10" cy="10" r="6.5" fill="#d02020" /><path d="M1 4 L4 1" stroke="#000" /></Sm></ToolCell>
        <ToolCell><Sm width="20" height="20" viewBox="0 0 20 20"><circle cx="10" cy="10" r="6" fill="#ffe000" stroke="#000" /><T x="7.4" y="13" s="8" w="700">P</T><path d="M0 10 H4 M16 10 H20" stroke="#000" /></Sm></ToolCell>
        <ToolCell><Sm width="20" height="20" viewBox="0 0 20 20"><path d="M3 18 L2 16 L11 7 L13 9 L4 18 Z" fill="#3060d0" stroke="#000" /><path d="M11 5 L15 9 L19 5 L15 1 Z" fill="#d01030" /></Sm></ToolCell>
      </ToolsGrid>
      <ToolsBottom>
        <S width="34" height="32" viewBox="0 0 34 32">
          <rect x="14" y="12" width="20" height="20" fill="#000" /><rect x="15" y="13" width="17" height="17" fill="#e0e0e0" />
          <rect x="1" y="1" width="20" height="20" fill="#000" /><rect x="2" y="2" width="17" height="17" fill="#e0e0e0" />
        </S>
        <Sm width="26" height="26" viewBox="0 0 26 26"><path d="M15 10 L24 1" stroke="#9a7850" strokeWidth="3.4" /><path d="M13 9 L18 14 L12 20 Q6 24 2 25 Q5 18 9 13 Z" fill="#222" /><path d="M2 25 Q4 20 8 17 L10 20 Q6 23 2 25 Z" fill="#ffe000" /></Sm>
      </ToolsBottom>
    </Tools>

    <Palette>
      <PalTitle>
        <Pin />函数
        <PalSearch><Magnifier />搜索</PalSearch>
      </PalTitle>
      <PalBody>
        <PalMain>
          <PalNav>编程<NavArrow /></PalNav>
          <PalGrid><Items list={palItems} /></PalGrid>
          <Categories>{categories.map((c) => <Category key={c}>{c}</Category>)}</Categories>
        </PalMain>
        <PalScroll>
          <ScrollUp><Chevron dir="up" /></ScrollUp>
          <ScrollThumb />
          <ScrollDown><Sm width="6" height="4" viewBox="0 0 6 4"><path d="M0 0 H6 L3 4 Z" fill="#444" /></Sm></ScrollDown>
        </PalScroll>
      </PalBody>
    </Palette>

    <SubPalette>
      <SubTitle><Pin />文件I/O</SubTitle>
      <SubCaption>创建路径</SubCaption>
      <SubGrid><Items list={subItems} /></SubGrid>
    </SubPalette>

    <Node $x={1155} $y={28}><BaiduBadge /></Node>
    <Watermark>https://blog.csdn.net/qq_36139202</Watermark>
  </Desktop>
);

export default App;
